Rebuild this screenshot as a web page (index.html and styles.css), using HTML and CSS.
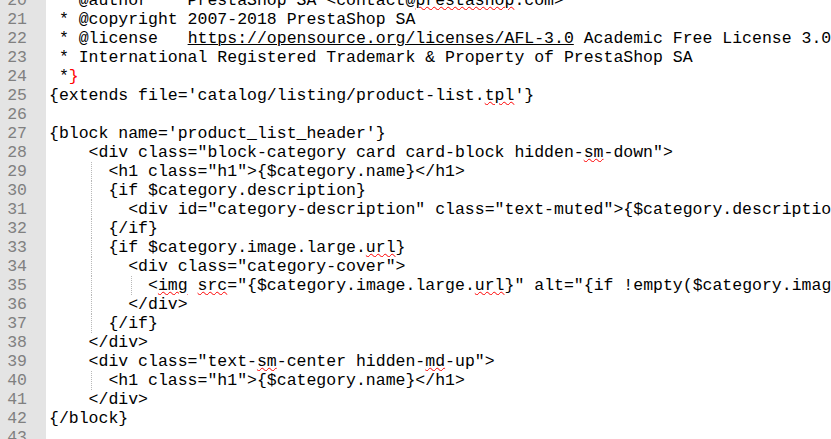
FILE: index.html
```html
<!DOCTYPE html>
<html>
<head>
<meta charset="utf-8">
<link rel="stylesheet" href="styles.css">
</head>
<body>
<div class="editor">
  <div class="gutter">
    <div class="n">20</div><div class="n">21</div><div class="n">22</div><div class="n">23</div><div class="n">24</div><div class="n">25</div><div class="n">26</div><div class="n">27</div><div class="n">28</div><div class="n">29</div><div class="n">30</div><div class="n">31</div><div class="n">32</div><div class="n">33</div><div class="n">34</div><div class="n">35</div><div class="n">36</div><div class="n">37</div><div class="n">38</div><div class="n">39</div><div class="n">40</div><div class="n">41</div><div class="n">42</div><div class="n">43</div>
  </div>
  <div class="code">
<div class="l"> * @author    PrestaShop SA &lt;contact@<span class="sp">prestashop</span>.com&gt;</div>
<div class="l"> * @copyright 2007-2018 PrestaShop SA</div>
<div class="l"> * @license   <span class="url">https://opensource.org/licenses/AFL-3.0</span> Academic Free License 3.0 (AFL-3.0)</div>
<div class="l"> * International Registered Trademark &amp; Property of PrestaShop SA</div>
<div class="l"> *<span class="brace">}</span></div>
<div class="l">{extends file='catalog/listing/product-list.<span class="sp">tpl</span>'}</div>
<div class="l"> </div>
<div class="l">{block name='product_list_header'}</div>
<div class="l">    &lt;div class="block-category card card-block hidden-<span class="sp">sm</span>-down"&gt;</div>
<div class="l g1">      &lt;h1 class="h1"&gt;{$category.name}&lt;/h1&gt;</div>
<div class="l g1">      {if $category.description}</div>
<div class="l g1">        &lt;div id="category-description" class="text-muted"&gt;{$category.description nofilter}&lt;/div&gt;</div>
<div class="l g1">      {/if}</div>
<div class="l g1">      {if $category.image.large.<span class="sp">url</span>}</div>
<div class="l g1">        &lt;div class="category-cover"&gt;</div>
<div class="l g2">          &lt;<span class="sp">img</span> <span class="sp">src</span>="{$category.image.large.<span class="sp">url</span>}" alt="{if !empty($category.image.legend)}{$category.image.legend}{else}{$category.name}{/if}"&gt;</div>
<div class="l g1">        &lt;/div&gt;</div>
<div class="l g1">      {/if}</div>
<div class="l">    &lt;/div&gt;</div>
<div class="l">    &lt;div class="text-<span class="sp">sm</span>-center hidden-<span class="sp">md</span>-up"&gt;</div>
<div class="l g1">      &lt;h1 class="h1"&gt;{$category.name}&lt;/h1&gt;</div>
<div class="l">    &lt;/div&gt;</div>
<div class="l">{/block}</div>
<div class="l"> </div>
  </div>
</div>
</body>
</html>
```
FILE: styles.css
```css
html, body {
  margin: 0;
  padding: 0;
  background: #ffffff;
  overflow: hidden;
}

.editor {
  display: flex;
  height: 439px;
  overflow: hidden;
  font-family: "Liberation Mono", "Courier New", monospace;
  font-size: 16.5px;
  line-height: 19px;
}

.gutter {
  width: 46px;
  flex: 0 0 46px;
  margin-top: -9px;
  background: #e4e4e4;
  color: #808080;
  text-align: right;
  box-sizing: border-box;
  padding-right: 19px;
}

.n {
  height: 19px;
  white-space: pre;
}

.code {
  flex: 1;
  margin-top: -9px;
  padding-left: 3px;
  color: #000000;
  min-width: 0;
}

.l {
  height: 19px;
  white-space: pre;
  overflow: hidden;
}

.g1 {
  background-image: repeating-linear-gradient(to bottom, #b8b8b8 0 1px, transparent 1px 2px);
  background-size: 1px 100%;
  background-position: 42px 0;
  background-repeat: no-repeat;
}

.g2 {
  background-image:
    repeating-linear-gradient(to bottom, #b8b8b8 0 1px, transparent 1px 2px),
    repeating-linear-gradient(to bottom, #b8b8b8 0 1px, transparent 1px 2px);
  background-size: 1px 100%, 1px 100%;
  background-position: 42px 0, 82px 0;
  background-repeat: no-repeat;
}

.url {
  text-decoration: underline solid #000;
  text-decoration-thickness: 1px;
  text-underline-offset: 1px;
}

.sp {
  text-decoration: underline wavy #ff0000;
  text-decoration-thickness: 1px;
  text-underline-offset: 1px;
}

.brace {
  color: #ff0000;
}
```
